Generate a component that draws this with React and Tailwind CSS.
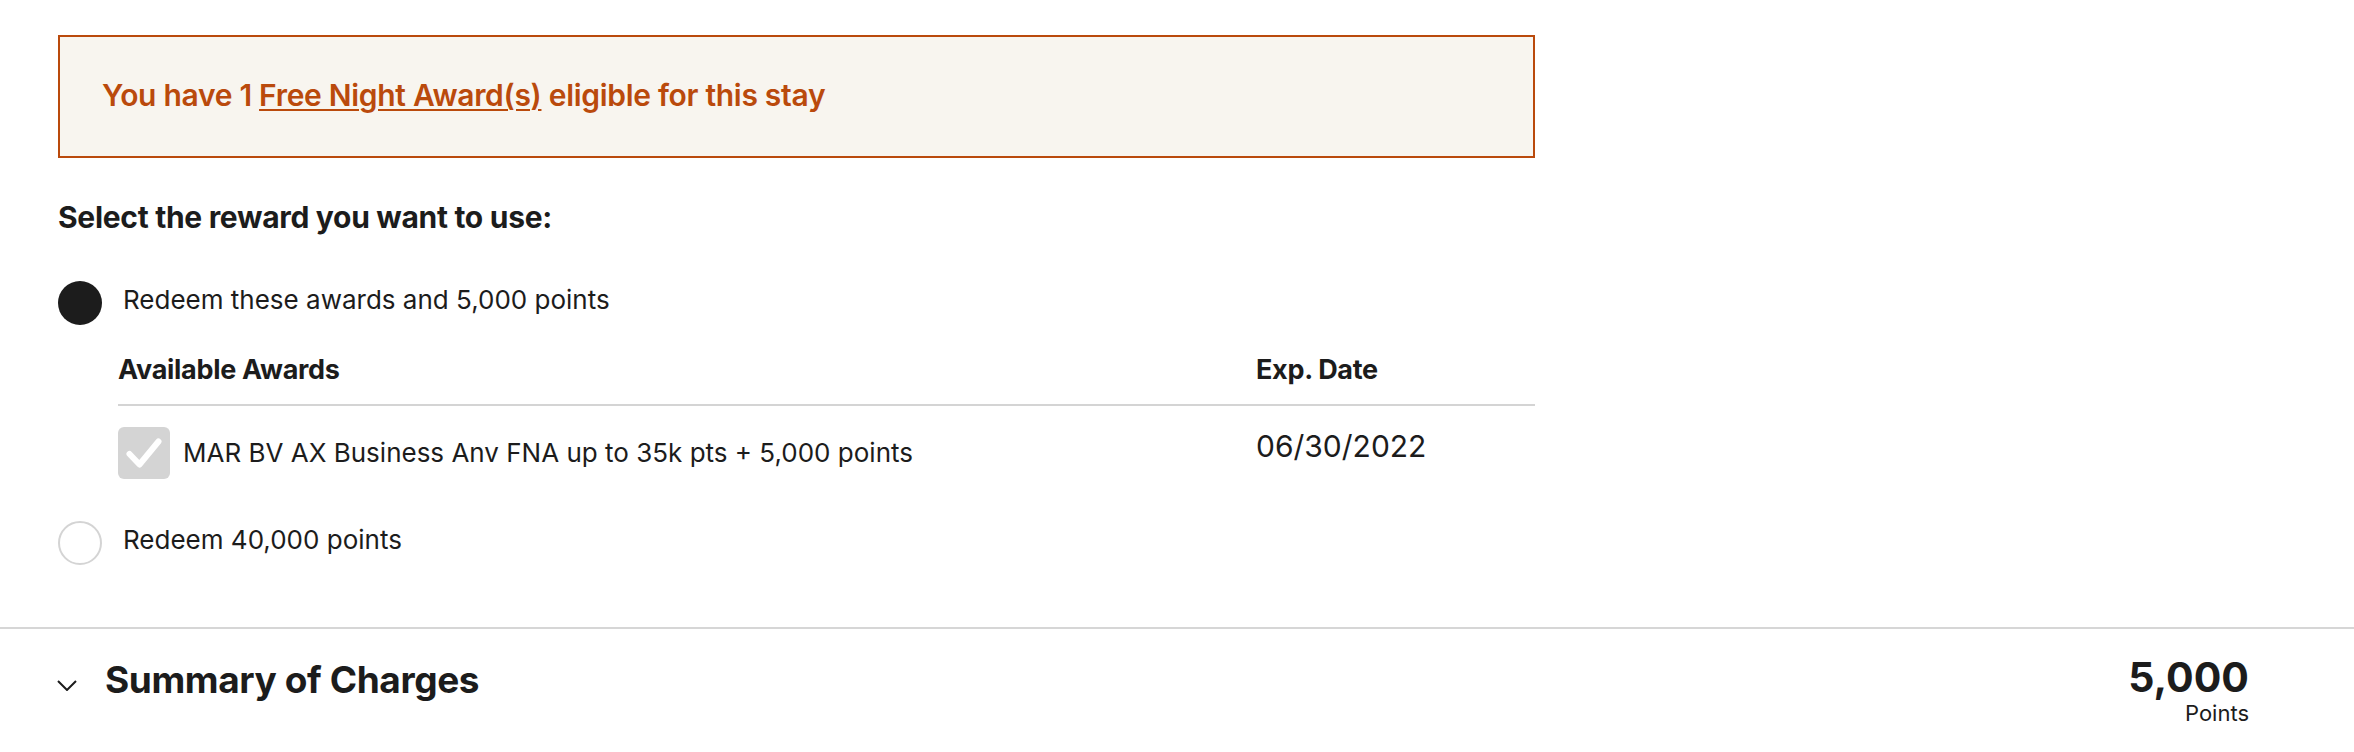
import React from 'react';

const font = { fontFamily: 'Inter, "Noto Sans", sans-serif' };

function Radio({ checked }) {
    return checked ? (
        <span className="block w-[44px] h-[44px] rounded-full bg-[#1c1c1c] shrink-0" />
    ) : (
        <span className="block w-[44px] h-[44px] rounded-full border-2 border-[#d4d4d4] bg-white shrink-0" />
    );
}

function CheckBox() {
    return (
        <span className="flex items-center justify-center w-[52px] h-[52px] rounded-[6px] bg-[#d4d4d4] shrink-0">
            <svg width="52" height="52" viewBox="0 0 52 52" fill="none">
                <path d="M11.5 27 L21.5 37.5 L40.5 14.5" stroke="#ffffff" strokeWidth="6" strokeLinecap="round" strokeLinejoin="round" />
            </svg>
        </span>
    );
}

export default function App() {
    return (
        <div className="min-h-screen w-full bg-white text-[#1c1c1c]" style={font}>
            <div className="pl-[58px] pt-[35px]">
                {/* free night banner */}
                <div className="w-[1477px] h-[123px] border-2 border-[#ba4a0c] bg-[#f8f5ef] flex items-center pl-[42px]">
                    <p className="pb-[2px] text-[30px] font-semibold tracking-[-0.3px] text-[#ba4a0c]">
                        You have 1{' '}
                        <a href="#" className="underline decoration-2 underline-offset-[3px]">Free Night Award(s)</a>{' '}
                        eligible for this stay
                    </p>
                </div>

                <div className="mt-[39px] h-[40px] flex items-center">
                    <h3 className="text-[30px] font-bold tracking-[-0.3px]">Select the reward you want to use:</h3>
                </div>

                {/* option 1 */}
                <div className="mt-[44px] h-[44px] flex items-center gap-[21px]">
                    <Radio checked />
                    <span className="pb-[7px] text-[26px]">Redeem these awards and 5,000 points</span>
                </div>

                <div className="ml-[60px] w-[1417px]">
                    <div className="mt-[25px] h-[40px] flex items-center">
                        <span className="w-[1138px] text-[27px] font-bold tracking-[-0.3px]">Available Awards</span>
                        <span className="text-[27px] font-bold tracking-[-0.3px]">Exp. Date</span>
                    </div>
                    <div className="mt-[14px] h-[2px] bg-[#d4d4d4]" />
                    <div className="mt-[21px] flex items-start">
                        <div className="w-[1138px] flex items-center gap-[13px]">
                            <CheckBox />
                            <span className="pb-[2px] text-[26px]">MAR BV AX Business Anv FNA up to 35k pts + 5,000 points</span>
                        </div>
                        <span className="text-[30px] leading-[38px]">06/30/2022</span>
                    </div>
                </div>

                {/* option 2 */}
                <div className="mt-[42px] h-[44px] flex items-center gap-[21px]">
                    <Radio />
                    <span className="pb-[8px] text-[26px]">Redeem 40,000 points</span>
                </div>
            </div>

            {/* summary */}
            <div className="mt-[62px] border-t-2 border-[#d6d6d6] flex items-start justify-between pl-[57px] pr-[105px]">
                <div className="flex items-start gap-[28px] pt-[26px]">
                    <svg className="mt-[25px]" width="20" height="11" viewBox="0 0 20 11" fill="none">
                        <path d="M1 1 L10 10 L19 1" stroke="#1c1c1c" strokeWidth="2" />
                    </svg>
                    <h2 className="text-[37px] font-bold leading-[50px] tracking-[-0.4px]">Summary of Charges</h2>
                </div>
                <div className="pt-[24px] text-right">
                    <div className="text-[41px] font-bold leading-[48px]">5,000</div>
                    <div className="text-[22px] leading-[24px]">Points</div>
                </div>
            </div>
        </div>
    );
}
